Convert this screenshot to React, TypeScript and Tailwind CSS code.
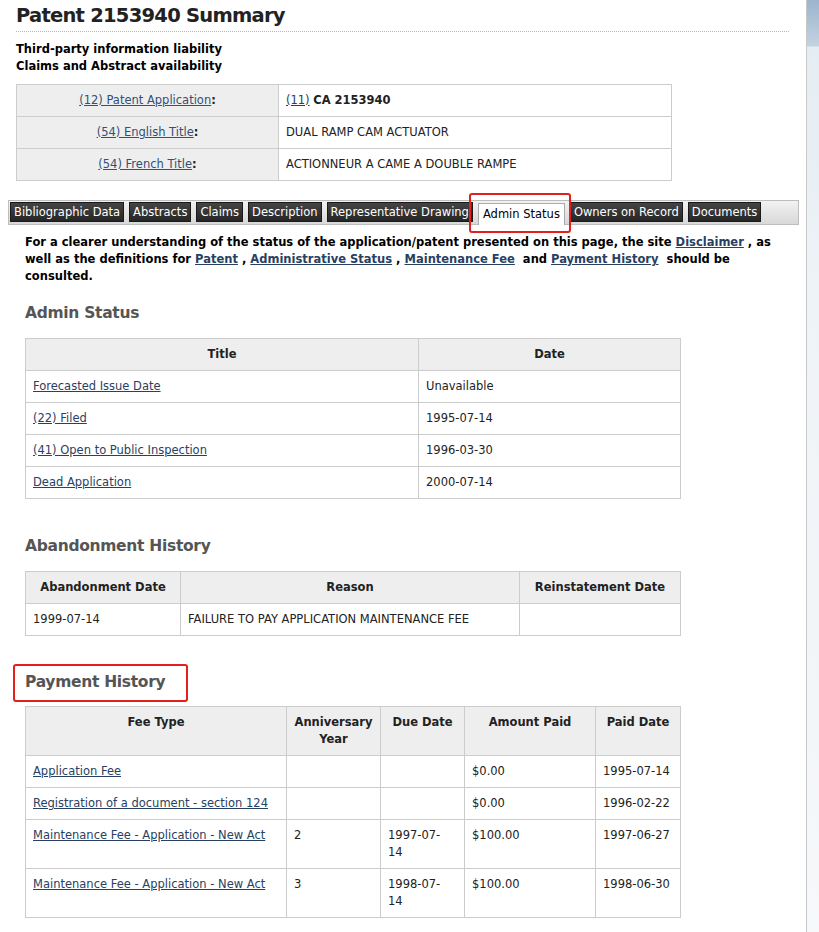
import React from 'react';

const LINK = 'text-[#284162] underline';

const TABS = [
  'Bibliographic Data',
  'Abstracts',
  'Claims',
  'Description',
  'Representative Drawing',
  'Admin Status',
  'Owners on Record',
  'Documents',
];

const td = 'border border-[#cccccc] px-[7px] py-[7px] align-top leading-[17px]';
const th = 'border border-[#cccccc] bg-[#eeeeee] px-[7px] py-[7px] align-top leading-[17px] font-bold text-center';

function Heading({ children }: { children: React.ReactNode }) {
  return <h2 className="text-[15.5px] leading-[20px] font-bold tracking-[-0.3px] text-[#555555]">{children}</h2>;
}

export default function App() {
  return (
    <div className="flex min-h-[932px] bg-white font-['DejaVu_Sans',Verdana,sans-serif] text-[11.5px] text-[#222222]">
      <div className="w-[807px] shrink-0 border-r border-[#c8c8c8] pl-4 pb-6">
        {/* Title */}
        <div className="mr-[17px] h-[32px] border-b border-dotted border-[#b8b8b8]">
          <h1 className="pt-[3px] text-[19.5px] leading-[26px] font-bold tracking-[-0.75px] text-[#222222]">Patent 2153940 Summary</h1>
        </div>

        <div className="mt-[9px] font-bold leading-[17px] text-black">
          <div>Third-party information liability</div>
          <div>Claims and Abstract availability</div>
        </div>

        {/* Summary */}
        <table className="mt-[9px] w-[656px] table-fixed border-collapse">
          <tbody>
            {[
              ['(12) Patent Application', <><a className={LINK}>(11)</a> <b>CA 2153940</b></>],
              ['(54) English Title', 'DUAL RAMP CAM ACTUATOR'],
              ['(54) French Title', 'ACTIONNEUR A CAME A DOUBLE RAMPE'],
            ].map(([k, v], i) => (
              <tr key={i}>
                <td className={`${td} w-[262px] bg-[#eeeeee] text-center`}>
                  <a className="text-[#335075] underline">{k}</a>
                  <b>:</b>
                </td>
                <td className={td}>{v}</td>
              </tr>
            ))}
          </tbody>
        </table>

        {/* Tabs */}
        <div className="-ml-2 mt-[19px] flex h-[25px] w-[791px] items-end gap-[5px] border border-[#bdbdbd] bg-[linear-gradient(#f2f2f2,#d8d8d8)] pl-[1px]">
          {TABS.map((t) =>
            t === 'Admin Status' ? (
              <div key={t} className="relative mb-[-1px] h-[22px] border border-b-0 border-[#aaaaaa] bg-white px-[4px] leading-[21px] text-black">
                {t}
                <div className="pointer-events-none absolute -top-[11px] -left-[10px] h-[40px] w-[102px] rounded-[3px] border-2 border-[#e3201b]" />
              </div>
            ) : (
              <div key={t} className="mb-[2px] h-[20px] border border-[#1a1a1a] bg-[linear-gradient(#444,#262626)] px-[3px] leading-[18px] text-white">
                {t}
              </div>
            )
          )}
        </div>

        <div className="ml-[9px] mr-[20px]">
          <p className="mt-[9px] font-bold leading-[17px] text-black">
            For a clearer understanding of the status of the application/patent presented on this page, the site{' '}
            <a className={LINK}>Disclaimer</a> , as well as the definitions for <a className={LINK}>Patent</a> ,{' '}
            <a className={LINK}>Administrative Status</a> , <a className={LINK}>Maintenance Fee</a>&nbsp; and{' '}
            <a className={LINK}>Payment History</a>&nbsp; should be consulted.
          </p>

          {/* Admin Status */}
          <div className="mt-[18px]">
            <Heading>Admin Status</Heading>
          </div>
          <table className="mt-[15px] w-[656px] table-fixed border-collapse">
            <thead>
              <tr>
                <th className={th}>Title</th>
                <th className={`${th} w-[262px]`}>Date</th>
              </tr>
            </thead>
            <tbody>
              {[
                ['Forecasted Issue Date', 'Unavailable'],
                ['(22) Filed', '1995-07-14'],
                ['(41) Open to Public Inspection', '1996-03-30'],
                ['Dead Application', '2000-07-14'],
              ].map(([a, b]) => (
                <tr key={a}>
                  <td className={td}><a className={LINK}>{a}</a></td>
                  <td className={td}>{b}</td>
                </tr>
              ))}
            </tbody>
          </table>

          {/* Abandonment */}
          <div className="mt-[37px]">
            <Heading>Abandonment History</Heading>
          </div>
          <table className="mt-[15px] w-[656px] table-fixed border-collapse">
            <thead>
              <tr>
                <th className={`${th} w-[155px]`}>Abandonment Date</th>
                <th className={th}>Reason</th>
                <th className={`${th} w-[161px]`}>Reinstatement Date</th>
              </tr>
            </thead>
            <tbody>
              <tr>
                <td className={td}>1999-07-14</td>
                <td className={td}>FAILURE TO PAY APPLICATION MAINTENANCE FEE</td>
                <td className={td}></td>
              </tr>
            </tbody>
          </table>

          {/* Payment */}
          <div className="relative mt-[36px]">
            <Heading>Payment History</Heading>
            <div className="pointer-events-none absolute -top-[8px] -left-[12px] h-[38px] w-[175px] rounded-[3px] border-2 border-[#e3201b]" />
          </div>
          <table className="mt-[14px] w-[656px] table-fixed border-collapse">
            <thead>
              <tr>
                <th className={th}>Fee Type</th>
                <th className={`${th} w-[94px] px-1`}>Anniversary<br />Year</th>
                <th className={`${th} w-[84px] px-1`}>Due Date</th>
                <th className={`${th} w-[131px]`}>Amount Paid</th>
                <th className={`${th} w-[85px] px-1`}>Paid Date</th>
              </tr>
            </thead>
            <tbody>
              {[
                ['Application Fee', '', '', '$0.00', '1995-07-14'],
                ['Registration of a document - section 124', '', '', '$0.00', '1996-02-22'],
                ['Maintenance Fee - Application - New Act', '2', '1997-07-|14', '$100.00', '1997-06-27'],
                ['Maintenance Fee - Application - New Act', '3', '1998-07-|14', '$100.00', '1998-06-30'],
              ].map(([a, y, d, amt, p], i) => (
                <tr key={i}>
                  <td className={`${td} whitespace-nowrap`}><a className={LINK}>{a}</a></td>
                  <td className={td}>{y}</td>
                  <td className={td}>
                    {d && (
                      <>
                        {d.split('|')[0]}
                        <br />
                        {d.split('|')[1]}
                      </>
                    )}
                  </td>
                  <td className={td}>{amt}</td>
                  <td className={`${td} whitespace-nowrap`}>{p}</td>
                </tr>
              ))}
            </tbody>
          </table>
        </div>
      </div>
      <div className="w-[12px] shrink-0 bg-[linear-gradient(#9cb4cd_0px,#c3d3e1_46px,#e4edf3_47px,#eef3f7_300px,#f6f8fa_932px)]" />
    </div>
  );
}
